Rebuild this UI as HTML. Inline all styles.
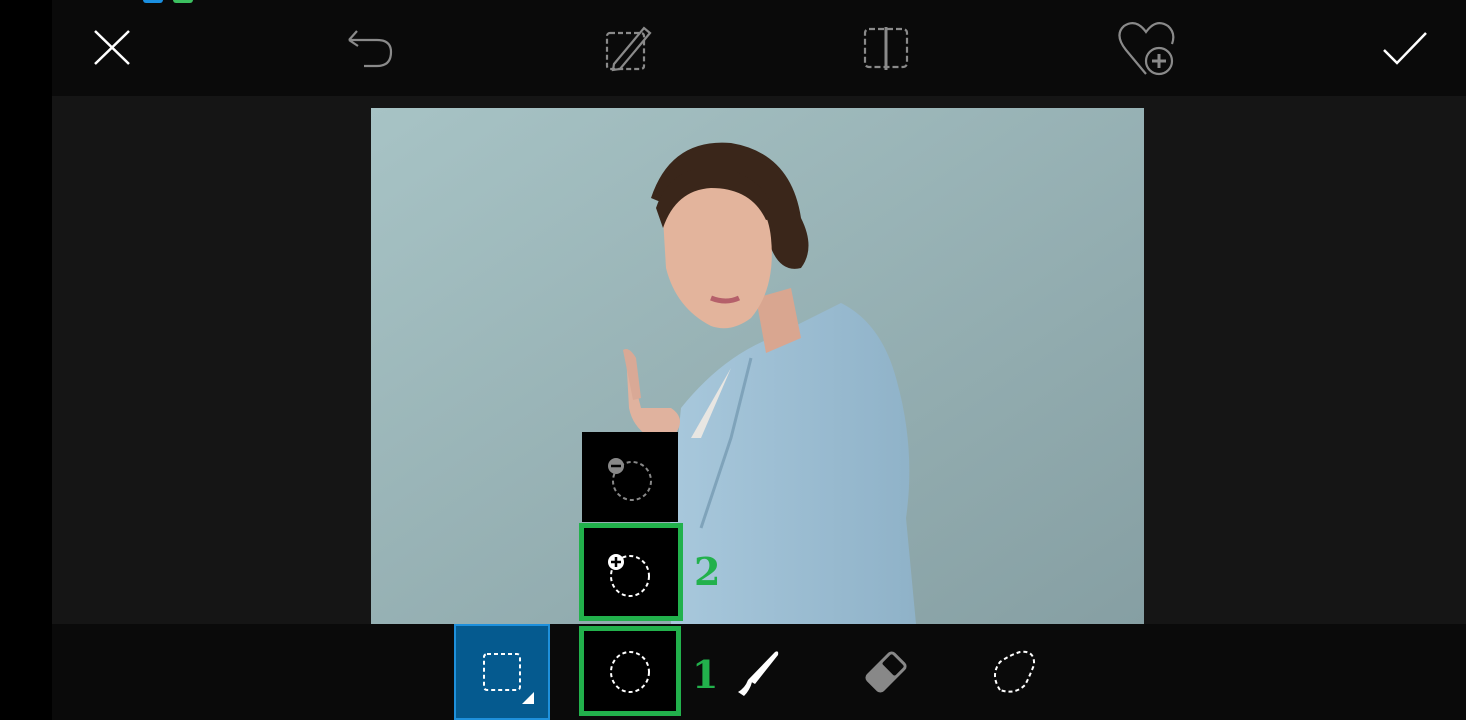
<!DOCTYPE html>
<html><head><style>
*{margin:0;padding:0;box-sizing:border-box}
body{width:1466px;height:720px;background:#000;position:relative;overflow:hidden;font-family:"Liberation Serif",serif}
.abs{position:absolute}
</style></head><body>
<div class="abs" style="left:52px;top:0;width:1414px;height:96px;background:#0a0a0a"></div>
<div class="abs" style="left:143px;top:0;width:20px;height:3px;background:#1a8fe0;border-radius:0 0 3px 3px"></div>
<div class="abs" style="left:173px;top:0;width:20px;height:3px;background:#3cc060;border-radius:0 0 3px 3px"></div>
<div class="abs" style="left:52px;top:96px;width:1414px;height:528px;background:#151515"></div>
<div class="abs" style="left:52px;top:624px;width:1414px;height:96px;background:#0a0a0a"></div>

<!-- top icons -->
<svg class="abs" style="left:0;top:0" width="1466" height="96">
<g stroke="#fff" stroke-width="2.5" fill="none"><path d="M95 31 L129 64 M129 31 L95 64"/><path d="M1384 50 L1397 63 L1426 33"/></g>
<g stroke="#8a8a8a" stroke-width="2.2" fill="none">
<path d="M349 40 L357 31 M349 40 L358 46 M350 40 L377 40 Q391 40 391 52 Q391 66 377 66 L364 66"/>
<rect x="607" y="33" width="37" height="36" rx="3" stroke-dasharray="5 3"/>
<path d="M614 64 L644 28 L650 33 L620 69 L613 70 Z"/>
<rect x="865" y="29" width="42" height="38" rx="4" stroke-dasharray="6 3"/>
<path d="M886 27 V70" stroke-width="3"/>
<path d="M1146 74 L1126 50 Q1114 35 1124 26 Q1136 18 1146 32 Q1156 18 1168 26 Q1176 33 1172 44"/>
<circle cx="1159" cy="61" r="13"/>
<path d="M1159 54 V68 M1152 61 H1166" stroke-width="3"/>
</g>
</svg>

<!-- photo -->
<svg class="abs" style="left:371px;top:108px" width="773" height="516">
<defs><linearGradient id="bg" x1="0" y1="0" x2="1" y2="1"><stop offset="0" stop-color="#a7c3c5"/><stop offset="1" stop-color="#869fa3"/></linearGradient>
<linearGradient id="jk" x1="0" y1="0" x2="1" y2="0"><stop offset="0" stop-color="#a8c8dc"/><stop offset="1" stop-color="#8fb2c8"/></linearGradient></defs>
<rect width="773" height="516" fill="url(#bg)"/>
<path d="M310 300 Q350 250 400 230 L470 195 Q510 215 525 270 Q545 340 535 410 L545 516 L300 516 Q295 420 305 350 Z" fill="url(#jk)"/>
<path d="M380 250 L360 330 L330 420" stroke="#7fa3ba" stroke-width="3" fill="none"/>
<path d="M360 260 L330 330 L320 330 Z" fill="#e8e6e2"/>
<path d="M255 245 Q265 280 270 300 L300 300 Q315 310 305 325 L280 330 Q262 320 258 300 Z" fill="#e0b29e"/>
<path d="M252 242 Q258 238 265 250 L270 290 L262 292 Z" fill="#d9a996"/>
<path d="M385 190 L420 180 L430 230 L395 245 Z" fill="#d9a690"/>
<path d="M280 90 Q300 30 360 35 Q420 45 430 110 Q445 140 430 160 Q410 165 400 140 Z" fill="#3a261a"/>
<path d="M292 110 Q300 70 345 72 Q395 80 400 130 Q405 180 380 210 Q360 225 340 218 Q305 200 295 160 Z" fill="#e3b49c"/>
<path d="M285 100 Q300 55 350 60 Q395 68 405 110 L395 112 Q380 80 340 80 Q305 82 292 120 Z" fill="#3a261a"/>
<path d="M340 190 Q355 196 368 190" stroke="#b5606a" stroke-width="5" fill="none"/>
</svg>

<!-- popup -->
<div class="abs" style="left:582px;top:432px;width:96px;height:90px;background:#000"></div>
<div class="abs" style="left:579px;top:523px;width:104px;height:98px;border:5px solid #22b14c;background:#000"></div>
<div class="abs" style="left:579px;top:626px;width:102px;height:90px;border:5px solid #22b14c;background:#000"></div>
<div class="abs" style="left:454px;top:624px;width:96px;height:96px;background:#055a8f;border:2px solid #1e90dc"></div>
<div class="abs" style="left:694px;top:550px;color:#22b14c;font-weight:bold;font-family:'DejaVu Serif',serif;font-size:38px;line-height:44px">2</div>
<div class="abs" style="left:692px;top:653px;color:#22b14c;font-weight:bold;font-family:'DejaVu Serif',serif;font-size:38px;line-height:44px">1</div>

<svg class="abs" style="left:0;top:0" width="1466" height="720">
<g fill="none" stroke-dasharray="4 3" stroke-width="2">
<ellipse cx="632" cy="481" rx="19" ry="19" stroke="#888"/>
<ellipse cx="630" cy="576" rx="19" ry="20" stroke="#fff"/>
<ellipse cx="630" cy="672" rx="19" ry="20" stroke="#fff"/>
<rect x="484" y="654" width="36" height="36" rx="3" stroke="#fff"/>
<path d="M1000 690 Q990 675 1000 662 Q1010 655 1020 652 Q1035 650 1034 665 Q1028 680 1025 685 Q1015 695 1000 690 Z" stroke="#fff"/>
</g>
<circle cx="616" cy="466" r="8" fill="#888"/><path d="M611 466 H621" stroke="#000" stroke-width="2.5"/>
<circle cx="616" cy="562" r="8" fill="#fff"/><path d="M611 562 H621 M616 557 V567" stroke="#000" stroke-width="2.5"/>
<path d="M522 704 L534 692 L534 704 Z" fill="#fff"/>
<path d="M738 692 Q745 688 748 680 L752 682 Q750 690 744 696 Z M748 680 L775 652 Q779 650 778 655 L755 684 Z" fill="#fff"/>
<g transform="rotate(45 886 672)"><rect x="874" y="652" width="24" height="40" rx="5" fill="#888"/><rect x="876" y="654" width="20" height="16" rx="3" fill="#0a0a0a" stroke="#888" stroke-width="2"/></g>
</svg>
</body></html>
